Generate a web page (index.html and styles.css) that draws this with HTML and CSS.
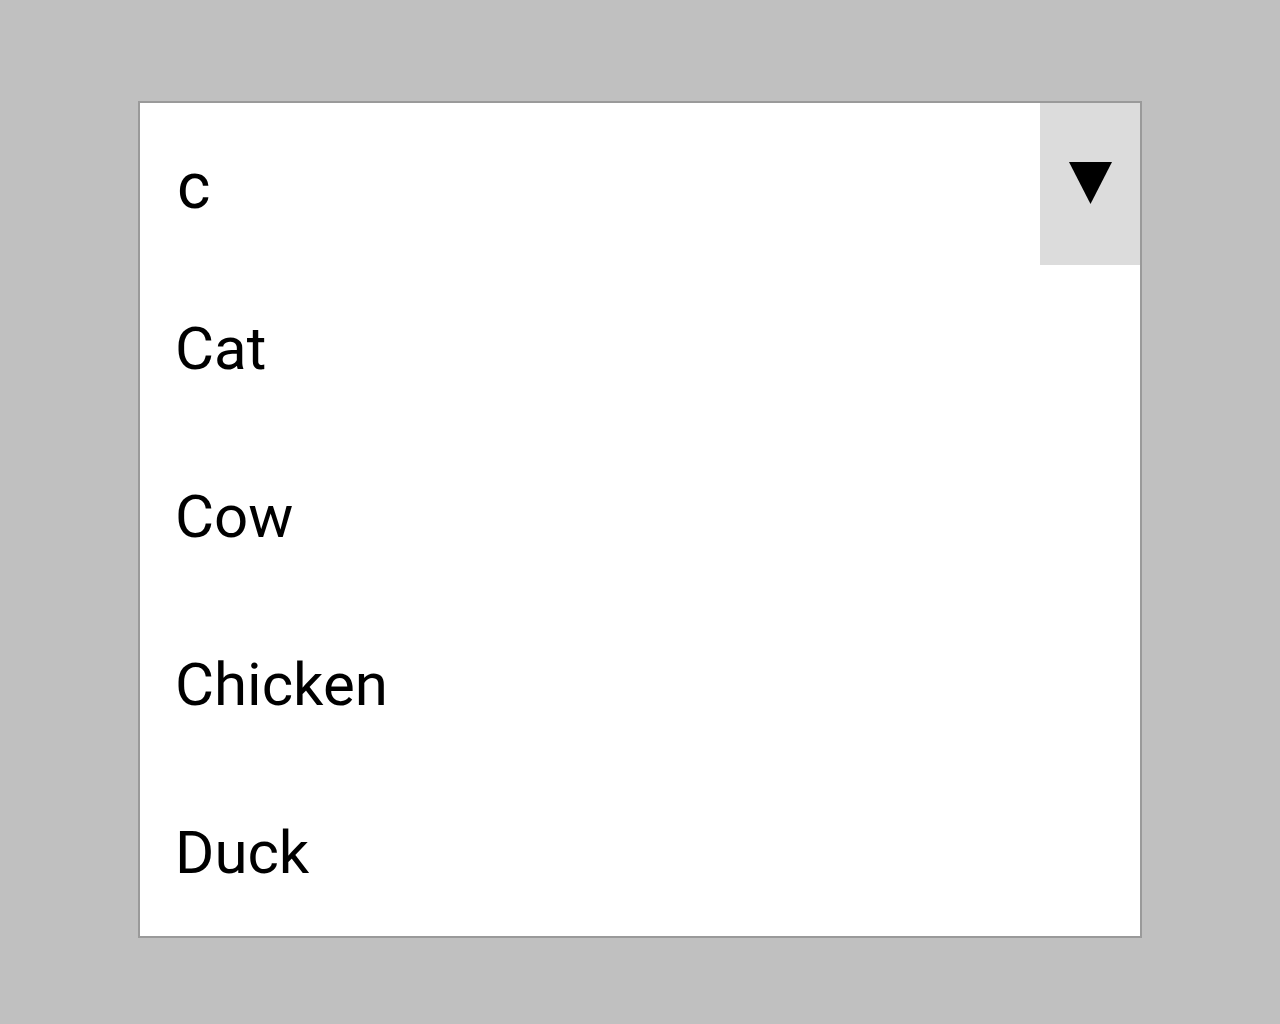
FILE: index.html
```html
<!DOCTYPE html>
<html>
<head>
<meta charset="utf-8">
<link rel="stylesheet" href="styles.css">
</head>
<body>
<div class="combo">
  <div class="combo-head">
    <div class="combo-input">c</div>
    <div class="combo-btn">
      <svg width="43" height="42" viewBox="0 0 43 42"><polygon points="0,0 43,0 21.5,42" fill="#000"/></svg>
    </div>
  </div>
  <ul class="combo-list">
    <li class="combo-item">Cat</li>
    <li class="combo-item">Cow</li>
    <li class="combo-item">Chicken</li>
    <li class="combo-item">Duck</li>
  </ul>
</div>
</body>
</html>
```
FILE: styles.css
```css
html, body {
  margin: 0;
  padding: 0;
  background: #c0c0c0;
  width: 1280px;
  height: 1024px;
}
body {
  font-family: Roboto, "Noto Sans", sans-serif;
  color: #000;
  padding-top: 101px;
  padding-left: 138px;
  box-sizing: border-box;
}
.combo {
  width: 1004px;
  height: 837px;
  box-sizing: border-box;
  border: 2px solid #9a9a9a;
  background: #fff;
  display: flex;
  flex-direction: column;
}
.combo-head {
  height: 162px;
  display: flex;
  align-items: stretch;
}
.combo-input {
  flex: 1;
  display: flex;
  align-items: center;
  padding-left: 37px;
  font-size: 64px;
  padding-top: 4px;
}
.combo-btn {
  width: 100px;
  background: #dcdcdc;
  display: flex;
  align-items: center;
  justify-content: center;
  padding-bottom: 2px;
  box-sizing: border-box;
}
.combo-list {
  list-style: none;
  margin: 0;
  padding: 0;
  flex: 1;
  display: flex;
  flex-direction: column;
}
.combo-item {
  flex: 1;
  display: flex;
  align-items: center;
  padding-left: 35px;
  font-size: 60px;
}
```
